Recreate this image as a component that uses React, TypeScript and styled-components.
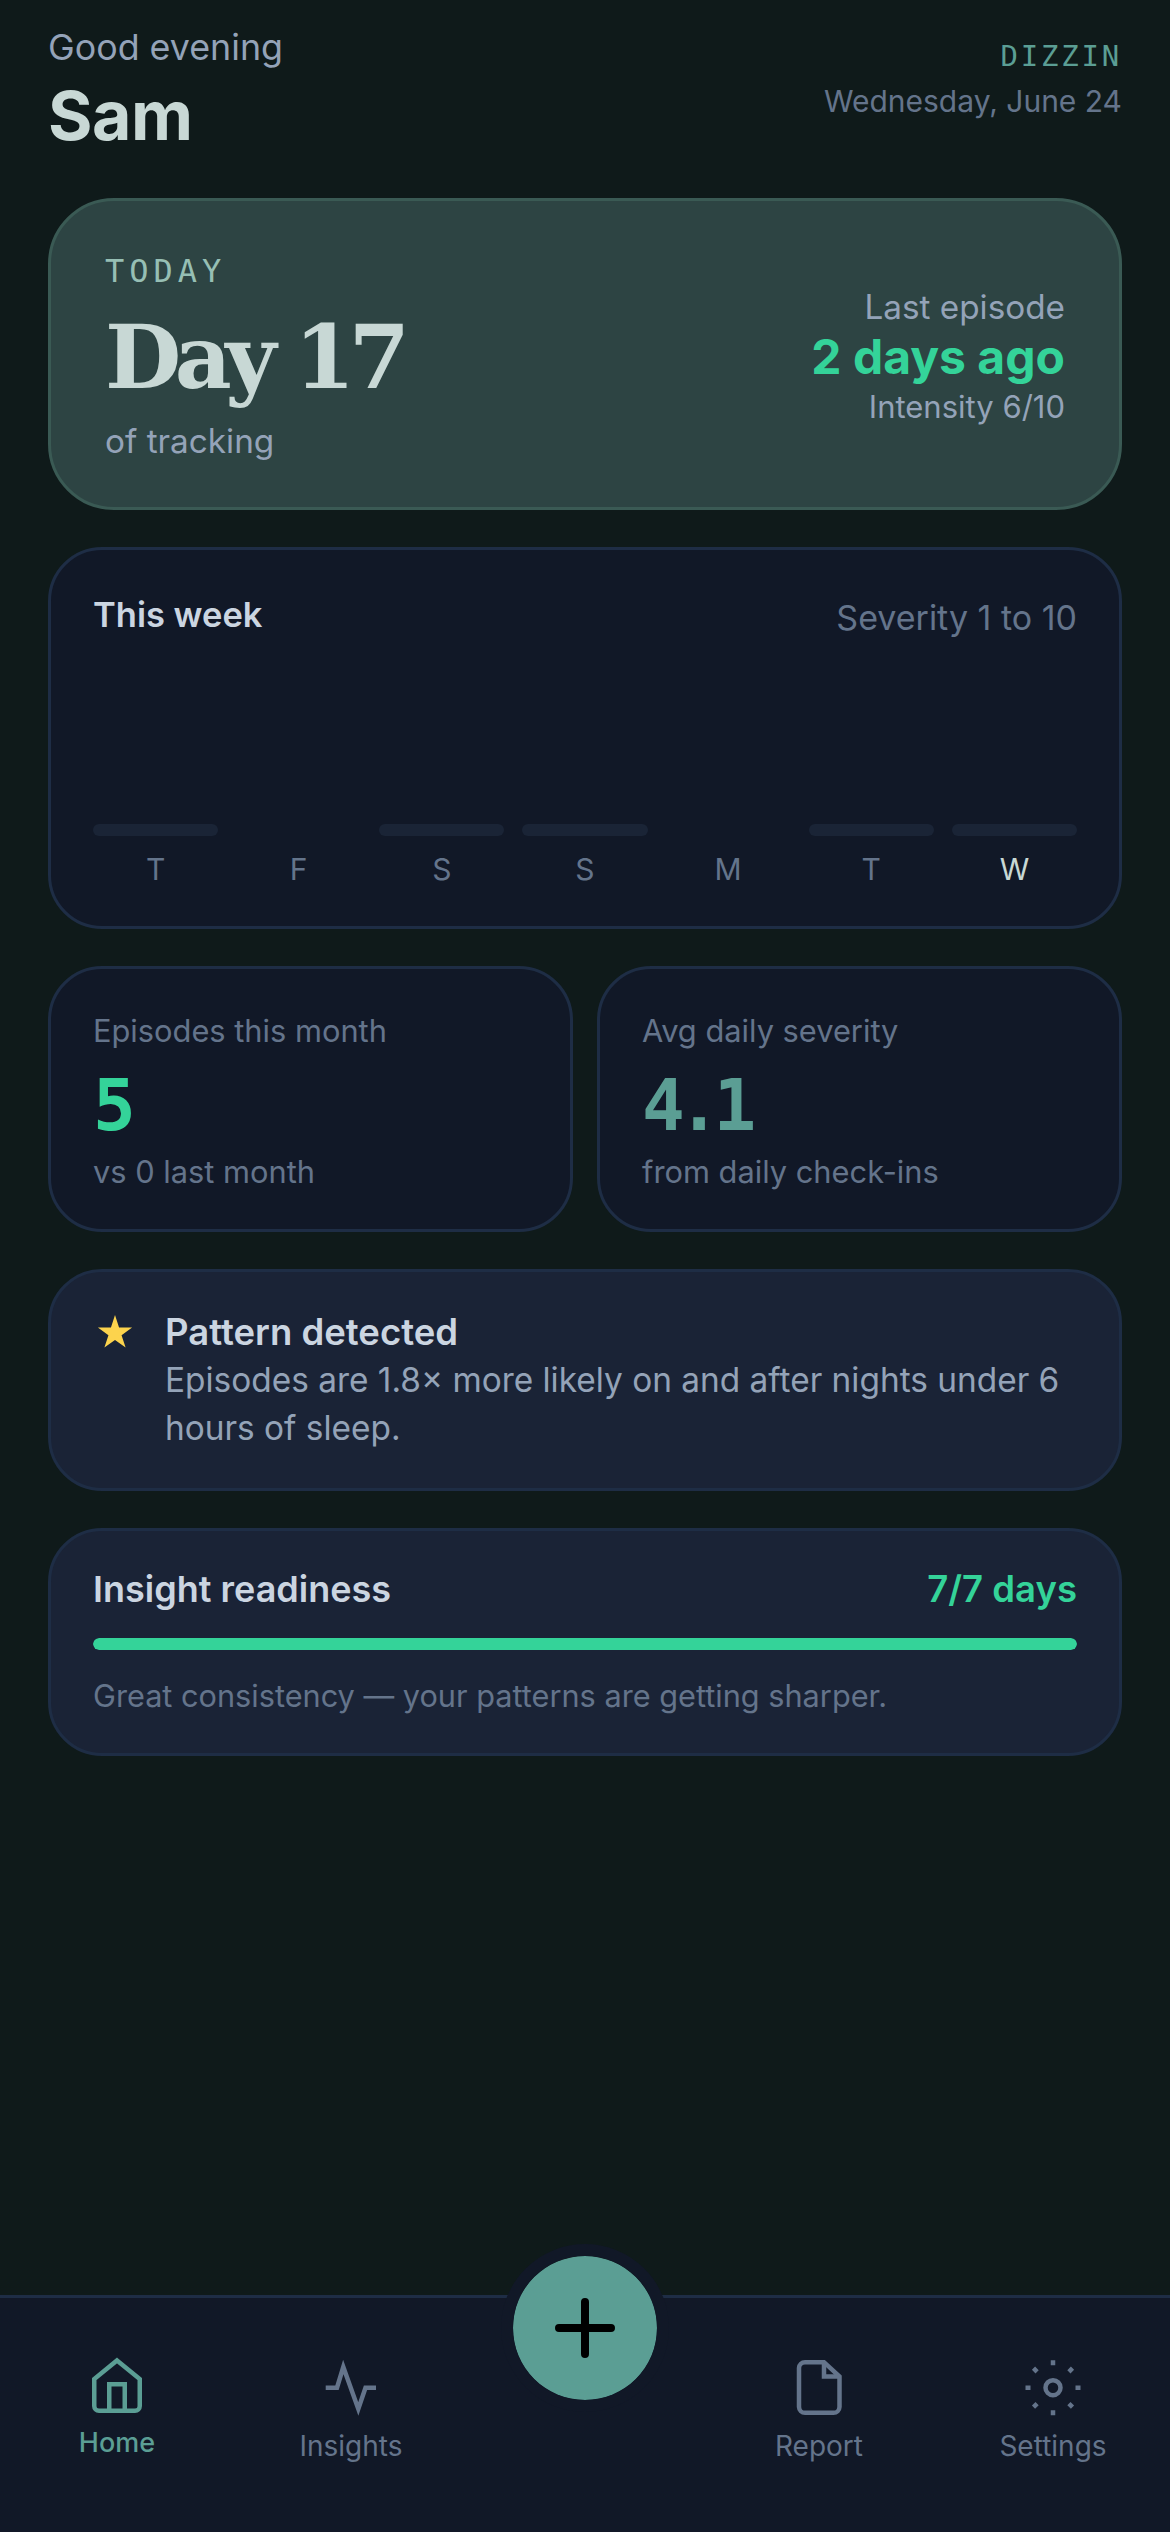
import styled, { createGlobalStyle } from 'styled-components';

const GlobalStyle = createGlobalStyle`
  html, body {
    margin: 0;
    padding: 0;
    background: #0f1a1a;
  }
  * {
    box-sizing: border-box;
  }
`;

const days = [
  { label: 'T', filled: true },
  { label: 'F', filled: false },
  { label: 'S', filled: true },
  { label: 'S', filled: true },
  { label: 'M', filled: false },
  { label: 'T', filled: true },
  { label: 'W', filled: true, today: true },
];

export default function App() {
  return (
    <>
      <GlobalStyle />
      <Page>
        <Main>
          <Header>
            <div>
              <Greeting>Good evening</Greeting>
              <Name>Sam</Name>
            </div>
            <HeaderRight>
              <Brand>DIZZIN</Brand>
              <DateText>Wednesday, June 24</DateText>
            </HeaderRight>
          </Header>

          <Hero>
            <div>
              <HeroEyebrow>TODAY</HeroEyebrow>
              <HeroTitle>Day 17</HeroTitle>
              <HeroSub>of tracking</HeroSub>
            </div>
            <HeroRight>
              <HeroSub>Last episode</HeroSub>
              <HeroAgo>2 days ago</HeroAgo>
              <HeroIntensity>Intensity 6/10</HeroIntensity>
            </HeroRight>
          </Hero>

          <WeekCard>
            <WeekHead>
              <WeekTitle>This week</WeekTitle>
              <WeekHint>Severity 1 to 10</WeekHint>
            </WeekHead>
            <Chart>
              {days.map((d, i) => (
                <DayCol key={i}>
                  <Bar $filled={d.filled} />
                  <DayLabel $today={d.today}>{d.label}</DayLabel>
                </DayCol>
              ))}
            </Chart>
          </WeekCard>

          <StatGrid>
            <StatCard>
              <StatLabel>Episodes this month</StatLabel>
              <StatValue $color="#34d399">5</StatValue>
              <StatLabel>vs 0 last month</StatLabel>
            </StatCard>
            <StatCard>
              <StatLabel>Avg daily severity</StatLabel>
              <StatValue $color="#5b9e94">4.1</StatValue>
              <StatLabel>from daily check-ins</StatLabel>
            </StatCard>
          </StatGrid>

          <PatternCard>
            <StarIcon viewBox="0 0 36 36" aria-hidden="true">
              <path
                d="M18 1l4.05 12.4 13.05 0-10.54 7.73L28.6 33.6 18 25.9 7.4 33.6l4.04-12.47L.9 13.4l13.05 0z"
                fill="#fcd34d"
              />
            </StarIcon>
            <div>
              <PatternTitle>Pattern detected</PatternTitle>
              <PatternBody>Episodes are 1.8× more likely on and after nights under 6 hours of sleep.</PatternBody>
            </div>
          </PatternCard>

          <ReadinessCard>
            <ReadinessHead>
              <ReadinessTitle>Insight readiness</ReadinessTitle>
              <ReadinessCount>7/7 days</ReadinessCount>
            </ReadinessHead>
            <Track>
              <Fill style={{ width: `${(7 / 7) * 100}%` }} />
            </Track>
            <ReadinessNote>Great consistency — your patterns are getting sharper.</ReadinessNote>
          </ReadinessCard>
        </Main>

        <Nav>
          <NavItem $active>
            <NavIcon viewBox="0 0 66 66">
              <path d="M33 6.5L55.75 25v27a4.75 4.75 0 0 1-4.75 4.75H15A4.75 4.75 0 0 1 10.25 52V25z" />
              <path d="M25.25 56.75V30.25h15.5v26.5" />
            </NavIcon>
            <NavLabel $active>Home</NavLabel>
          </NavItem>
          <NavItem>
            <NavIcon viewBox="0 0 66 66">
              <path d="M7.7 33.7H19L25.3 13l15 42 7.2-21.3H58" />
            </NavIcon>
            <NavLabel>Insights</NavLabel>
          </NavItem>
          <FabSlot />
          <NavItem>
            <NavIcon viewBox="0 0 66 66">
              <path d="M19 8.2h19l15.5 14.3V53a6 6 0 0 1-6 5.8H19a6 6 0 0 1-6-5.8V14a6 6 0 0 1 6-5.8z" />
              <path d="M38 8.2v14.3h15.5" />
            </NavIcon>
            <NavLabel>Report</NavLabel>
          </NavItem>
          <NavItem>
            <NavIcon viewBox="0 0 66 66">
              <circle cx="33" cy="33.7" r="7.5" />
              <path d="M33 6.2v5M33 56.2v5M5.5 33.7h5M55.5 33.7h5M48.9 17.8l3.6-3.6M13.5 53.2l3.6-3.6M13.5 14.2l3.6 3.6M48.9 49.6l3.6 3.6" />
            </NavIcon>
            <NavLabel>Settings</NavLabel>
          </NavItem>
          <Fab aria-label="Add">
            <svg viewBox="0 0 60 60" width="60" height="60" fill="none" stroke="#000" strokeWidth="8" strokeLinecap="round">
              <path d="M30 4v52M4 30h52" />
            </svg>
          </Fab>
        </Nav>
      </Page>
    </>
  );
}

const Page = styled.div`
  display: flex;
  flex-direction: column;
  height: 2532px;
  width: 1170px;
  overflow: hidden;
  background: #0f1a1a;
  font-family: 'Inter', sans-serif;
`;

const Main = styled.main`
  flex: 1;
  display: flex;
  flex-direction: column;
  gap: 37px;
  padding: 24px 48px 0;
`;

const Header = styled.header`
  display: flex;
  justify-content: space-between;
  align-items: flex-start;
  height: 137px;
`;

const Greeting = styled.div`
  font-size: 35.8px;
  line-height: 47px;
  color: #94a3b8;
`;

const Name = styled.div`
  font-size: 68px;
  line-height: 88px;
  font-weight: 700;
  color: #c8d8d5;
  letter-spacing: -0.5px;
`;

const HeaderRight = styled.div`
  display: flex;
  flex-direction: column;
  align-items: flex-end;
`;

const Brand = styled.div`
  font-family: 'DejaVu Sans Mono', monospace;
  font-size: 29px;
  line-height: 40px;
  letter-spacing: 2.8px;
  color: #5b9e94;
  margin-top: 12px;
`;

const DateText = styled.div`
  font-size: 30px;
  line-height: 44px;
  color: #64748b;
  margin-top: 3px;
`;

const Hero = styled.section`
  display: flex;
  justify-content: space-between;
  align-items: flex-start;
  height: 312px;
  padding: 52px 54px 0;
  background: #2d4443;
  border: 3px solid #3a5a54;
  border-radius: 66px;
`;

const HeroEyebrow = styled.div`
  font-family: 'DejaVu Sans Mono', monospace;
  font-size: 32px;
  line-height: 36px;
  letter-spacing: 5px;
  margin-bottom: 4px;
  color: #96bfb4;
`;

const HeroTitle = styled.div`
  font-family: 'DejaVu Serif', serif;
  font-size: 88px;
  line-height: 128px;
  font-weight: 700;
  letter-spacing: -6.5px;
  color: #c8d8d5;
  margin-bottom: -2px;
`;

const HeroSub = styled.div`
  font-size: 33.3px;
  line-height: 44px;
  color: #94a3b8;
`;

const HeroRight = styled.div`
  display: flex;
  flex-direction: column;
  align-items: flex-end;
  margin-top: 32px;
`;

const HeroAgo = styled.div`
  font-size: 48px;
  line-height: 56px;
  font-weight: 700;
  color: #34d399;
`;

const HeroIntensity = styled.div`
  font-size: 31px;
  line-height: 44px;
  color: #94a3b8;
`;

const Card = styled.section`
  border: 3px solid #1e2d45;
  border-radius: 54px;
  background: #111827;
`;

const WeekCard = styled(Card)`
  height: 382px;
  padding: 42px 42px 0;
`;

const WeekHead = styled.div`
  display: flex;
  justify-content: space-between;
  align-items: flex-start;
`;

const WeekTitle = styled.div`
  font-size: 34.5px;
  line-height: 46px;
  font-weight: 600;
  color: #cbd5e1;
`;

const WeekHint = styled.div`
  font-size: 34px;
  line-height: 46px;
  padding-top: 3px;
  color: #64748b;
`;

const Chart = styled.div`
  display: grid;
  grid-template-columns: repeat(7, 1fr);
  gap: 18px;
  margin-top: 183px;
`;

const DayCol = styled.div`
  display: flex;
  flex-direction: column;
  align-items: stretch;
  text-align: center;
`;

const Bar = styled.div<{ $filled?: boolean }>`
  height: 12px;
  border-radius: 6px;
  background: ${({ $filled }) => ($filled ? '#1a2436' : 'transparent')};
`;

const DayLabel = styled.div<{ $today?: boolean }>`
  margin-top: 14px;
  font-size: 30px;
  line-height: 38px;
  color: ${({ $today }) => ($today ? '#c8d8d5' : '#64748b')};
`;

const StatGrid = styled.div`
  display: grid;
  grid-template-columns: 1fr 1fr;
  gap: 24px;
`;

const StatCard = styled(Card)`
  height: 266px;
  padding: 42px 42px 0;
`;

const StatLabel = styled.div`
  font-size: 30.8px;
  line-height: 40px;
  color: #64748b;
`;

const StatValue = styled.div<{ $color: string }>`
  font-family: 'DejaVu Sans Mono', monospace;
  font-size: 71px;
  line-height: 92px;
  font-weight: 700;
  letter-spacing: -7px;
  margin-top: 9px;
  color: ${({ $color }) => $color};
`;

const PatternCard = styled(Card)`
  display: flex;
  gap: 32px;
  padding: 36px 42px;
  height: 222px;
  background: #1a2336;
`;

const StarIcon = styled.svg`
  width: 36px;
  height: 36px;
  flex: none;
  margin: 6px 0 0 4px;
`;

const PatternTitle = styled.div`
  font-size: 36.5px;
  line-height: 48px;
  font-weight: 600;
  color: #cbd5e1;
`;

const PatternBody = styled.div`
  font-size: 33.4px;
  line-height: 48px;
  color: #94a3b8;
`;

const ReadinessCard = styled(Card)`
  height: 228px;
  padding: 33px 42px 0;
  background: #1a2336;
`;

const ReadinessHead = styled.div`
  display: flex;
  justify-content: space-between;
  align-items: center;
`;

const ReadinessTitle = styled.div`
  font-size: 36px;
  line-height: 50px;
  font-weight: 600;
  color: #cbd5e1;
`;

const ReadinessCount = styled.div`
  font-size: 36.5px;
  line-height: 50px;
  font-weight: 600;
  color: #34d399;
`;

const Track = styled.div`
  margin-top: 24px;
  height: 12px;
  border-radius: 6px;
  background: #1e2d45;
  overflow: hidden;
`;

const Fill = styled.div`
  height: 100%;
  border-radius: 6px;
  background: #34d399;
`;

const ReadinessNote = styled.div`
  margin-top: 24px;
  font-size: 30.7px;
  line-height: 44px;
  color: #64748b;
`;

const Nav = styled.nav`
  position: relative;
  flex: none;
  height: 237px;
  display: grid;
  grid-template-columns: repeat(5, 234px);
  padding-top: 56px;
  background: #111827;
  border-top: 3px solid #1e2d45;
`;

const NavItem = styled.div<{ $active?: boolean }>`
  display: flex;
  flex-direction: column;
  align-items: center;
  color: ${({ $active }) => ($active ? '#5b9e94' : '#64748b')};
`;

const NavIcon = styled.svg`
  width: 66px;
  height: 66px;
  fill: none;
  stroke: currentColor;
  stroke-width: 4.5px;
  stroke-miterlimit: 10;
`;

const NavLabel = styled.div<{ $active?: boolean }>`
  margin-top: ${({ $active }) => ($active ? 5 : 8)}px;
  font-size: ${({ $active }) => ($active ? 27 : 28)}px;
  line-height: 36px;
  font-weight: ${({ $active }) => ($active ? 500 : 400)};
`;

const FabSlot = styled.div``;

const Fab = styled.button`
  position: absolute;
  top: -54px;
  left: 50%;
  width: 168px;
  height: 168px;
  transform: translateX(-50%);
  display: flex;
  align-items: center;
  justify-content: center;
  padding: 0;
  background: #5b9e94;
  background-clip: padding-box;
  border: 12px solid #111827;
  border-radius: 50%;
`;
